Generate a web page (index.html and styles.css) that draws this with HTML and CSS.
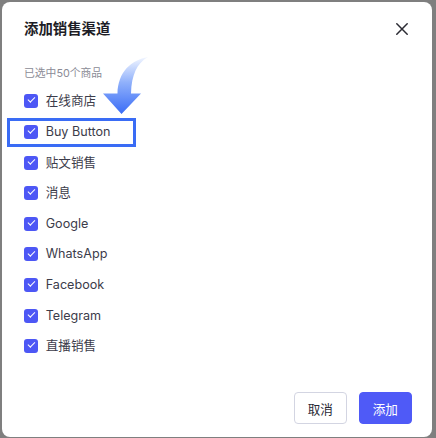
FILE: index.html
```html
<!DOCTYPE html>
<html lang="zh-CN">
<head>
<meta charset="utf-8">
<link rel="stylesheet" href="styles.css">
</head>
<body>
<div class="modal">
  <div class="header">
    <div class="title">添加销售渠道</div>
    <button class="close" aria-label="关闭">
      <svg width="12" height="12" viewBox="0 0 12 12"><path d="M0.8 0.8 L11.2 11.2 M11.2 0.8 L0.8 11.2" stroke="#2b2b33" stroke-width="1.5" stroke-linecap="round" fill="none"/></svg>
    </button>
  </div>
  <div class="hint">已选中50个商品</div>
  <ul class="list">
    <li class="row"><span class="cb"></span><span class="label">在线商店</span></li>
    <li class="row"><span class="cb"></span><span class="label">Buy Button</span></li>
    <li class="row"><span class="cb"></span><span class="label">贴文销售</span></li>
    <li class="row"><span class="cb"></span><span class="label">消息</span></li>
    <li class="row"><span class="cb"></span><span class="label">Google</span></li>
    <li class="row"><span class="cb"></span><span class="label">WhatsApp</span></li>
    <li class="row"><span class="cb"></span><span class="label">Facebook</span></li>
    <li class="row"><span class="cb"></span><span class="label">Telegram</span></li>
    <li class="row"><span class="cb"></span><span class="label">直播销售</span></li>
  </ul>
  <div class="footer">
    <button class="btn btn-default">取消</button>
    <button class="btn btn-primary">添加</button>
  </div>
  <div class="highlight"></div>
  <svg class="arrow" width="60" height="70" viewBox="95 50 60 70">
    <defs>
      <linearGradient id="ag" x1="0" y1="0" x2="0" y2="1">
        <stop offset="0" stop-color="#f2f6ff"/>
        <stop offset="0.45" stop-color="#8fb0fb"/>
        <stop offset="1" stop-color="#3a6cf6"/>
      </linearGradient>
    </defs>
    <path d="M148 57 C131 60 118 72 117.5 93.5 L103 93.5 L121.5 114 L141 93.5 L131 93.5 C131.5 75 137 63 148 57 Z" fill="url(#ag)"/>
  </svg>
</div>
</body>
</html>
```

FILE: styles.css
```css
html, body {
  margin: 0;
  padding: 0;
}
body {
  background: #7f7f7f;
  width: 436px;
  height: 438px;
  overflow: hidden;
  font-family: "Inter", "Noto Sans CJK SC", sans-serif;
}
.modal {
  position: relative;
  box-sizing: border-box;
  margin: 2px 0 0 2px;
  width: 430px;
  height: 435px;
  background: #ffffff;
  border-radius: 8px;
  padding: 17px 20px 0 22px;
}
.header {
  display: flex;
  justify-content: space-between;
  align-items: center;
  height: 20px;
}
.title {
  font-size: 14.4px;
  font-weight: 700;
  color: #1d1d26;
  line-height: 20px;
}
.close {
  width: 20px;
  height: 20px;
  padding: 0;
  border: 0;
  background: transparent;
  display: flex;
  align-items: center;
  justify-content: center;
}
.hint {
  margin-top: 26.5px;
  font-size: 10.8px;
  line-height: 16px;
  color: #8b8b96;
}
.list {
  list-style: none;
  margin: 4.5px 0 0 0;
  padding: 0;
}
.row {
  display: flex;
  align-items: center;
  height: 30.62px;
  gap: 7.7px;
}
.cb {
  box-sizing: border-box;
  width: 14px;
  height: 14px;
  border-radius: 3px;
  background: #4d57f5;
  position: relative;
  flex: none;
}
.cb::after {
  content: "";
  position: absolute;
  left: 4px;
  top: 3.2px;
  width: 5.5px;
  height: 3px;
  border-left: 1.3px solid #ffffff;
  border-bottom: 1.3px solid #ffffff;
  transform: rotate(-45deg);
}
.label {
  font-size: 12.6px;
  color: #3c3c4a;
  line-height: 18px;
}
.footer {
  margin-top: 30.7px;
  display: flex;
  justify-content: flex-end;
  gap: 11.6px;
}
.btn {
  box-sizing: border-box;
  width: 53.4px;
  height: 32px;
  border-radius: 4px;
  font-family: "Inter", "Noto Sans CJK SC", sans-serif;
  font-size: 12.6px;
  padding: 0;
  cursor: pointer;
}
.btn-default {
  background: #ffffff;
  border: 1px solid #d3d5e2;
  color: #2a2a35;
}
.btn-primary {
  background: #4f5af7;
  border: 1px solid #4f5af7;
  color: #ffffff;
}
.highlight {
  position: absolute;
  left: 5.3px;
  top: 116.3px;
  width: 128.7px;
  height: 28.4px;
  box-sizing: border-box;
  border: 3px solid #3a6cf5;
}
.arrow {
  position: absolute;
  left: 93px;
  top: 48px;
}
```
